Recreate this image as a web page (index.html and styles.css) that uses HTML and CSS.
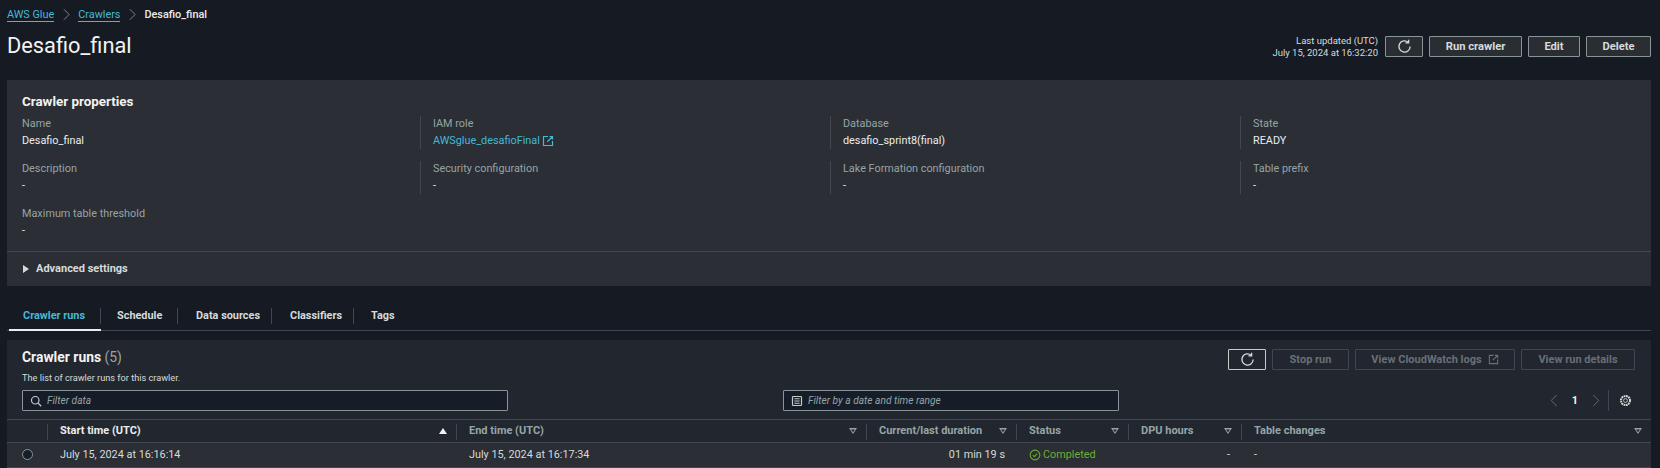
FILE: index.html
```html
<!DOCTYPE html>
<html lang="en">
<head>
    <meta charset="UTF-8">
    <title>Desafio_final</title>
    <link rel="stylesheet" href="styles.css">
</head>
<body>

    <nav class="crumbs">
        <a href="#">AWS Glue</a>
        <svg class="crumb-sep" viewBox="0 0 8 14"><path d="M1 1l6 6-6 6"/></svg>
        <a href="#">Crawlers</a>
        <svg class="crumb-sep" viewBox="0 0 8 14"><path d="M1 1l6 6-6 6"/></svg>
        <strong>Desafio_final</strong>
    </nav>

    <header class="page-head">
        <h1>Desafio_final</h1>
        <div class="page-actions">
            <div class="updated">Last updated (UTC)<br>July 15, 2024 at 16:32:20</div>
            <button class="btn btn-icon">
                <svg class="icon" viewBox="0 0 16 16"><path d="M14 8a6 6 0 1 1-2-4.5M12.4 .8v3.4H9"/></svg>
            </button>
            <button class="btn btn-run">Run crawler</button>
            <button class="btn btn-edit">Edit</button>
            <button class="btn btn-delete">Delete</button>
        </div>
    </header>

    <section class="props">
        <h2>Crawler properties</h2>
        <div class="props-grid">
            <div class="prop"><span>Name</span><b>Desafio_final</b></div>
            <div class="prop"><span>IAM role</span><b><a href="#">AWSglue_desafioFinal</a>
                <svg class="ext" viewBox="0 0 16 16"><path d="M8 2H2v12h12V8M10 2h4v4M14 2L7 9"/></svg></b></div>
            <div class="prop"><span>Database</span><b>desafio_sprint8(final)</b></div>
            <div class="prop"><span>State</span><b>READY</b></div>
            <div class="prop"><span>Description</span><b>-</b></div>
            <div class="prop"><span>Security configuration</span><b>-</b></div>
            <div class="prop"><span>Lake Formation configuration</span><b>-</b></div>
            <div class="prop"><span>Table prefix</span><b>-</b></div>
            <div class="prop"><span>Maximum table threshold</span><b>-</b></div>
        </div>
        <div class="advanced"><i class="caret"></i>Advanced settings</div>
    </section>

    <div class="tabs">
        <a class="tab active" href="#">Crawler runs</a>
        <a class="tab tab-schedule" href="#">Schedule</a>
        <a class="tab tab-sources" href="#">Data sources</a>
        <a class="tab tab-class" href="#">Classifiers</a>
        <a class="tab tab-last" href="#">Tags</a>
    </div>

    <section class="runs">
        <div class="runs-head">
            <div>
                <h2>Crawler runs <span>(5)</span></h2>
                <p>The list of crawler runs for this crawler.</p>
            </div>
            <div class="runs-actions">
                <button class="btn btn-icon btn-refresh">
                    <svg class="icon" viewBox="0 0 16 16"><path d="M14 8a6 6 0 1 1-2-4.5M12.4 .8v3.4H9"/></svg>
                </button>
                <button class="btn off btn-stop">Stop run</button>
                <button class="btn off btn-logs">View CloudWatch logs
                    <svg class="ext" viewBox="0 0 16 16"><path d="M8 2H2v12h12V8M10 2h4v4M14 2L7 9"/></svg>
                </button>
                <button class="btn off btn-details">View run details</button>
            </div>
        </div>

        <div class="filters">
            <div class="field field-text">
                <svg class="icon" viewBox="0 0 16 16"><circle cx="7" cy="7" r="5"/><path d="M11 11l4 4"/></svg>
                <em>Filter data</em>
            </div>
            <div class="field field-date">
                <svg class="icon cal" viewBox="0 0 16 16"><rect x="2" y="2" width="12" height="12" rx="1"/><path d="M4.5 5h7M4.5 8h7M4.5 11h7"/></svg>
                <em>Filter by a date and time range</em>
            </div>
            <div class="pager">
                <svg class="chev" viewBox="0 0 8 14"><path d="M7 1L1 7l6 6"/></svg>
                <b>1</b>
                <svg class="chev" viewBox="0 0 8 14"><path d="M1 1l6 6-6 6"/></svg>
                <i class="pager-sep"></i>
                <svg class="icon gear" viewBox="0 0 16 16"><circle cx="8" cy="8" r="2.4"/><circle cx="8" cy="8" r="5.6" stroke-dasharray="2.2 .73" stroke-width="2.4"/></svg>
            </div>
        </div>

        <div class="table">
            <div class="th th-radio"></div>
            <div class="th sorted">Start time (UTC)<i class="sort-up"></i></div>
            <div class="th">End time (UTC)<i class="sort-down"></i></div>
            <div class="th">Current/last duration<i class="sort-down"></i></div>
            <div class="th">Status<i class="sort-down"></i></div>
            <div class="th">DPU hours<i class="sort-down"></i></div>
            <div class="th th-last">Table changes<i class="sort-down"></i></div>

            <div class="td td-radio"><i class="radio"></i></div>
            <div class="td">July 15, 2024 at 16:16:14</div>
            <div class="td">July 15, 2024 at 16:17:34</div>
            <div class="td num">01 min 19 s</div>
            <div class="td ok">
                <svg viewBox="0 0 16 16"><circle cx="8" cy="8" r="6.5"/><path d="M5 8l2.2 2.2L11 6"/></svg>Completed
            </div>
            <div class="td num">-</div>
            <div class="td">-</div>
        </div>
    </section>

</body>
</html>
```

FILE: styles.css
```css
html {
    overflow: hidden;
}

body {
    margin: 0;
    padding: 0 9px 0 7px;
    height: 468px;
    box-sizing: border-box;
    background-color: #161a23;
    color: #d5dbdb;
    font-family: Roboto, "Open Sans", sans-serif;
    font-size: 10.85px;
    line-height: 16px;
}

a {
    color: #44b9d6;
    text-decoration: none;
}

button {
    font-family: inherit;
}

svg {
    fill: none;
    stroke: currentColor;
    flex: none;
}

.crumbs {
    display: flex;
    align-items: center;
    height: 29px;
}

.crumbs a {
    border-bottom: 1px solid #44b9d6;
    line-height: 13px;
}

.crumbs strong {
    color: #eaeded;
    font-weight: 500;
}

.crumb-sep {
    width: 7px;
    height: 13px;
    margin: 0 8px 0 9px;
    color: #879596;
}

.page-head {
    display: flex;
    justify-content: space-between;
    height: 51px;
}

h1 {
    margin: 0;
    font-size: 21.8px;
    font-weight: 400;
    line-height: 34px;
    color: #f2f3f3;
}

.page-actions {
    display: flex;
    gap: 6px;
    margin-top: 7px;
    align-items: flex-start;
}

.updated {
    text-align: right;
    font-size: 9.5px;
    line-height: 12px;
    margin: -1px 1px 0 0;
}

.btn {
    display: flex;
    align-items: center;
    justify-content: center;
    height: 21px;
    box-sizing: border-box;
    padding: 0;
    background-color: #2a2e33;
    border: 1px solid #879596;
    border-radius: 1px;
    color: #d5dbdb;
    font-size: 11.2px;
    font-weight: 700;
}

.btn-icon {
    width: 38px;
}

.btn-icon .icon {
    width: 15px;
    height: 15px;
    stroke-width: 1.4;
}

.btn-run {
    width: 93px;
}

.btn-edit {
    width: 52px;
}

.btn-delete {
    width: 65px;
}

.props {
    background-color: #2b2e34;
    height: 206px;
    box-sizing: border-box;
    padding-top: 13px;
}

.props h2 {
    margin: 0 0 5px 15px;
    font-size: 13.4px;
    font-weight: 700;
    line-height: 18px;
    color: #f2f3f3;
}

.props-grid {
    display: grid;
    grid-template-columns: 413px 410px 410px 1fr;
    grid-auto-rows: 33px;
    row-gap: 12px;
    height: 123px;
    margin-bottom: 12px;
}

.prop {
    display: flex;
    flex-direction: column;
    padding-left: 12px;
    border-left: 1px solid #414750;
    line-height: 16.5px;
}

.prop:nth-child(4n+1) {
    border-left: 0;
    padding-left: 15px;
}

.prop span {
    color: #95a5a6;
}

.prop b {
    font-weight: 400;
    color: #eaeded;
    display: flex;
    align-items: center;
    gap: 2px;
}

.ext {
    width: 12px;
    height: 12px;
    stroke-width: 1.6;
    color: #44b9d6;
}

.advanced {
    display: flex;
    align-items: center;
    height: 34px;
    border-top: 1px solid #414750;
    padding-left: 16px;
    font-size: 11px;
    font-weight: 700;
    color: #d5dbdb;
}

.caret {
    width: 0;
    height: 0;
    margin-right: 7px;
    border-left: 6px solid #d5dbdb;
    border-top: 4px solid transparent;
    border-bottom: 4px solid transparent;
}

.tabs {
    display: flex;
    align-items: flex-start;
    height: 44px;
    box-sizing: border-box;
    margin-top: 1px;
    margin-bottom: 9px;
    padding-left: 2px;
    border-bottom: 1px solid #414750;
}

.tab {
    display: flex;
    align-items: center;
    height: 43px;
    box-sizing: border-box;
    padding-top: 15px;
    font-size: 10.9px;
    font-weight: 700;
    color: #d5dbdb;
    position: relative;
}

.tab::after {
    content: "";
    position: absolute;
    right: 0;
    top: 21px;
    height: 16px;
    width: 1px;
    background-color: #414750;
}

.tab.active {
    width: 92px;
    padding-left: 14px;
    color: #44b9d6;
    border-bottom: 2px solid #eaeded;
    height: 44px;
}

.tab-schedule {
    width: 77px;
    padding-left: 16px;
}

.tab-sources {
    width: 94px;
    padding-left: 18px;
}

.tab-class {
    width: 82px;
    padding-left: 18px;
}

.tab-last {
    padding-left: 17px;
}

.tab-last::after {
    display: none;
}

.runs {
    background-color: #22262e;
    height: 128px;
    overflow: hidden;
}

.runs-head {
    display: flex;
    justify-content: space-between;
    height: 50px;
}

.runs-head h2 {
    margin: 8px 0 0 15px;
    font-size: 13.9px;
    font-weight: 700;
    line-height: 18px;
    color: #f2f3f3;
}

.runs-head h2 span {
    font-weight: 400;
    color: #95a5a6;
}

.runs-head p {
    margin: 6px 0 0 15px;
    font-size: 9.2px;
    line-height: 12px;
}

.runs-actions {
    display: flex;
    gap: 6px;
    margin: 9px 16px 0 0;
}

.btn-refresh {
    background: none;
    border-color: #c4cccc;
}

.off {
    background: none;
    border-color: #414750;
    color: #687078;
    font-size: 11px;
    padding-bottom: 1px;
}

.off .ext {
    width: 11px;
    height: 11px;
    color: #687078;
    margin-left: 6px;
}

.btn-stop {
    width: 77px;
}

.btn-logs {
    width: 160px;
}

.btn-details {
    width: 114px;
}

.filters {
    display: flex;
    align-items: center;
    height: 21px;
    padding-left: 15px;
}

.field {
    display: flex;
    align-items: center;
    height: 21px;
    box-sizing: border-box;
    padding-left: 7px;
    gap: 5px;
    background-color: #161d29;
    border: 1px solid #879596;
    border-radius: 1px;
    color: #95a5a6;
}

.field-text {
    width: 486px;
    margin-right: 275px;
}

.field-date {
    width: 336px;
}

.field .icon {
    width: 12px;
    height: 12px;
    stroke-width: 1.6;
    color: #c4cccc;
}

.field em {
    font-size: 10.2px;
}

.pager {
    margin-left: auto;
    margin-right: 19px;
    display: flex;
    align-items: center;
    color: #687078;
}

.chev {
    width: 8px;
    height: 13px;
}

.pager b {
    margin: 0 14px;
    color: #f2f3f3;
}

.pager-sep {
    width: 1px;
    height: 21px;
    margin: 0 10px 0 8px;
    background-color: #414750;
}

.gear {
    width: 13px;
    height: 13px;
    color: #d5dbdb;
}

.table {
    display: grid;
    grid-template-columns: 40px 409px 410px 150px 112px 113px 1fr;
    grid-template-rows: 23px 25px;
    margin-top: 8px;
    border-top: 1px solid #414750;
}

.th {
    display: flex;
    align-items: center;
    justify-content: space-between;
    position: relative;
    padding: 0 9px 0 13px;
    font-size: 11px;
    font-weight: 700;
    color: #95a5a6;
    border-bottom: 1px solid #414750;
}

.th::before {
    content: "";
    position: absolute;
    left: 0;
    top: 4px;
    height: 16px;
    width: 1px;
    background-color: #414750;
}

.th-radio::before {
    display: none;
}

.sorted {
    color: #eaeded;
}

.sort-up {
    border-left: 4px solid transparent;
    border-right: 4px solid transparent;
    border-bottom: 6px solid #f2f3f3;
}

.sort-down {
    width: 8px;
    height: 6px;
    clip-path: polygon(0 0, 100% 0, 50% 100%, 0 0, 25% 25%, 50% 70%, 75% 25%, 25% 25%);
    background-color: #95a5a6;
}

.td {
    display: flex;
    align-items: center;
    padding: 0 13px;
    background-color: #2b2e34;
    border-bottom: 1px solid #414750;
}

.num {
    justify-content: flex-end;
    padding-right: 11px;
}

.td-radio {
    padding: 0 0 0 15px;
}

.radio {
    width: 9px;
    height: 9px;
    margin-top: -1px;
    border: 1px solid #879596;
    border-radius: 50%;
    background-color: #161d29;
}

.ok {
    color: #6aaf35;
    gap: 2px;
}

.ok svg {
    width: 12px;
    height: 12px;
    stroke-width: 1.4;
}
```
